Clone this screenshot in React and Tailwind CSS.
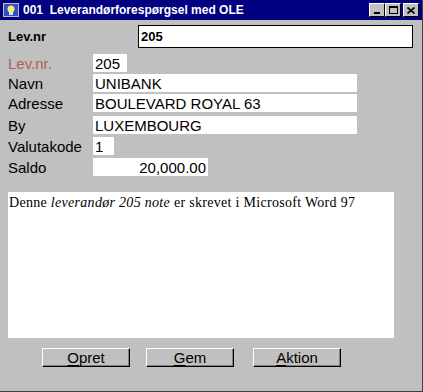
export default function App() {
  const sans = { fontFamily: '"Liberation Sans", Arial, sans-serif' }

  const Field = ({ label, value, width, right, labelClass = 'text-black', mt = 'mt-[2px]' }) => (
    <div className={`flex items-center h-[18px] ${mt}`}>
      <span className={`w-[85px] text-[15px] leading-none ${labelClass}`}>{label}</span>
      <div className={`h-[18px] bg-white px-[2px] flex items-center text-[15px] leading-none ${right ? 'justify-end' : ''}`} style={{ width }}>
        {value}
      </div>
    </div>
  )

  const Btn = ({ first, rest }) => (
    <button className="w-[88px] h-[19px] bg-[#c0c0c0] border border-t-white border-l-white border-r-black border-b-black shadow-[inset_-1px_-1px_0_#808080] text-[15px] leading-none flex items-center justify-center">
      <span className="underline decoration-1 underline-offset-2">{first}</span>
      {rest}
    </button>
  )

  const TitleBtn = ({ children, className = '' }) => (
    <div className={`w-[16px] h-[14px] bg-[#c0c0c0] border border-t-white border-l-white border-r-black border-b-black flex items-center justify-center ${className}`}>
      {children}
    </div>
  )

  return (
    <div className="w-[423px] h-[392px] bg-[#c0c0c0] border-r border-b border-r-[#404040] border-b-[#404040] flex flex-col" style={sans}>
      <div className="h-[20px] bg-[#000080] flex items-center pl-[3px] pr-[3px]">
        <svg width="16" height="14" viewBox="0 0 16 14" className="mr-[4px]">
          <rect x="0" y="0" width="16" height="14" fill="#c0c0c0" />
          <rect x="1" y="1" width="14" height="12" fill="#3050c0" />
          <circle cx="8" cy="6" r="3.5" fill="#f0f070" />
          <rect x="6" y="9" width="4" height="3" fill="#e0e0e0" />
        </svg>
        <span className="text-white font-bold text-[12px] leading-none whitespace-pre">001  Leverandørforespørgsel med OLE</span>
        <div className="ml-auto flex items-center">
          <TitleBtn>
            <div className="w-[6px] h-[2px] bg-black mt-[6px]" />
          </TitleBtn>
          <TitleBtn>
            <div className="w-[9px] h-[8px] border border-black border-t-2" />
          </TitleBtn>
          <TitleBtn className="ml-[2px]">
            <svg width="8" height="7" viewBox="0 0 8 7">
              <path d="M0.5 0.5 L7.5 6.5 M7.5 0.5 L0.5 6.5" stroke="black" strokeWidth="1.6" />
            </svg>
          </TitleBtn>
        </div>
      </div>

      <div className="flex items-center mt-[5px] pl-[8px]">
        <span className="w-[130px] font-bold text-[13px] leading-none">Lev.nr</span>
        <div className="w-[275px] h-[23px] bg-white border border-black flex items-center px-[2px] font-bold text-[13px] leading-none">205</div>
      </div>

      <div className="pl-[8px] mt-[6px] flex flex-col">
        <Field label="Lev.nr." value="205" width={34} labelClass="text-[#b06050]" mt="mt-0" />
        <Field label="Navn" value="UNIBANK" width={264} />
        <Field label="Adresse" value="BOULEVARD ROYAL 63" width={264} />
        <Field label="By" value="LUXEMBOURG" width={264} mt="mt-[4px]" />
        <Field label="Valutakode" value="1" width={21} mt="mt-[3px]" />
        <Field label="Saldo" value="20,000.00" width={115} right mt="mt-[3px]" />
      </div>

      <div className="ml-[8px] mt-[16px] w-[386px] h-[146px] bg-white pt-[2px] pl-[1px] text-[14px] tracking-[0.3px] leading-tight text-black" style={{ fontFamily: '"Liberation Serif", "Times New Roman", serif' }}>
        Denne <i>leverandør 205 note</i> er skrevet i Microsoft Word 97
      </div>

      <div className="flex mt-[10px] pl-[42px] gap-[16px]">
        <Btn first="O" rest="pret" />
        <Btn first="G" rest="em" />
        <div className="ml-[3px]">
          <Btn first="A" rest="ktion" />
        </div>
      </div>
    </div>
  )
}
